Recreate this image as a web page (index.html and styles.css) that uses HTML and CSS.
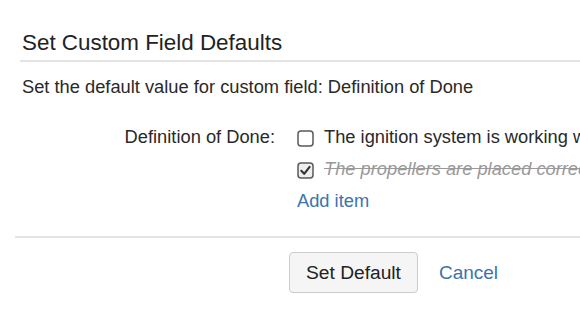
FILE: index.html
```html
<!DOCTYPE html>
<html lang="en">

<head>
    <meta charset="UTF-8">
    <meta name="viewport" content="width=device-width, initial-scale=1.0">
    <title>Set Custom Field Defaults</title>
    <link rel="stylesheet" href="styles.css">
</head>

<body>

    <div class="dialog">
        <h2 class="dialog-title">Set Custom Field Defaults</h2>
        <p class="description">Set the default value for custom field: Definition of Done</p>

        <div class="field-group">
            <label class="field-label">Definition of Done:</label>
            <div class="checklist">
                <div class="check-item">
                    <svg class="checkbox" width="17" height="17" viewBox="0 0 17 17">
                        <rect x="1" y="1" width="15" height="15" rx="3" fill="#fff" stroke="#5a5a5a" stroke-width="1.5"/>
                    </svg>
                    <span class="item-text">The ignition system is working well</span>
                </div>
                <div class="check-item done">
                    <svg class="checkbox" width="17" height="17" viewBox="0 0 17 17">
                        <rect x="1" y="1" width="15" height="15" rx="3" fill="#eee" stroke="#5a5a5a" stroke-width="1.5"/>
                        <path d="M4.3 8.8 L7.2 11.8 L12.6 4.8" fill="none" stroke="#333" stroke-width="2.1" stroke-linecap="round" stroke-linejoin="round"/>
                    </svg>
                    <span class="item-text">The propellers are placed correctly</span>
                </div>
                <div class="check-item">
                    <a href="#" class="link">Add item</a>
                </div>
            </div>
        </div>

        <div class="buttons">
            <button class="button">Set Default</button>
            <a href="#" class="link cancel">Cancel</a>
        </div>
    </div>

</body>

</html>
```

FILE: styles.css
```css
body {
    font-family: "Liberation Sans", Arial, sans-serif;
    color: #292929;
    margin: 0;
    overflow: hidden;
}

.dialog {
    padding-top: 29px;
    padding-left: 15px;
    width: 565px;
}

.dialog-title {
    margin: 0 0 0 5px;
    padding: 0 0 3px 2px;
    font-size: 22.4px;
    font-weight: normal;
    line-height: 28px;
    color: #222;
    border-bottom: 2px solid #e4e4e4;
    white-space: nowrap;
}

.description {
    margin: 13px 0 0 7px;
    font-size: 18.3px;
    line-height: 24px;
    white-space: nowrap;
}

.field-group {
    display: flex;
    margin-top: 22px;
    font-size: 18.3px;
    line-height: 32px;
    padding-bottom: 19px;
    border-bottom: 2px solid #e4e4e4;
}

.field-label {
    width: 260px;
    flex-shrink: 0;
    text-align: right;
}

.checklist {
    margin-left: 22px;
    white-space: nowrap;
    overflow: hidden;
}

.check-item {
    display: flex;
    align-items: center;
    height: 32px;
}

.checkbox {
    flex-shrink: 0;
    margin-top: 3px;
    margin-right: 10px;
}

.done .item-text {
    color: #999;
    font-style: italic;
    text-decoration: line-through;
}

.link {
    color: #3b73af;
    text-decoration: none;
}

.buttons {
    display: flex;
    align-items: center;
    padding-left: 274px;
    margin-top: 14px;
}

.button {
    font-family: inherit;
    font-size: 19.2px;
    color: #222;
    height: 41px;
    padding: 0 16px;
    background-color: #f5f5f5;
    border: 1px solid #ccc;
    border-radius: 4px;
}

.cancel {
    margin-left: 21px;
    font-size: 19px;
}
```
